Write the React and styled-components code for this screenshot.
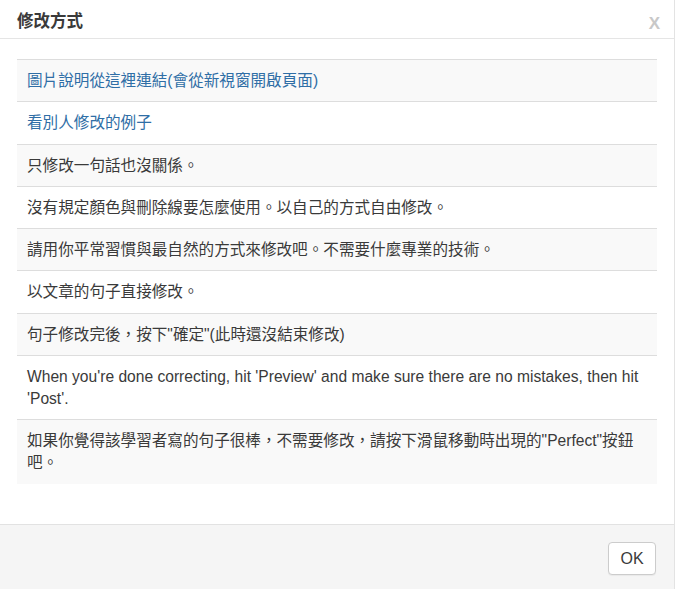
import React from "react";
import styled, { createGlobalStyle } from "styled-components";

const GlobalStyle = createGlobalStyle`
  html, body {
    margin: 0;
    padding: 0;
    background: #ffffff;
  }
  body {
    font-family: "Liberation Sans", "Noto Sans CJK TC", sans-serif;
    color: #3a3a3a;
  }
`;

const Dialog = styled.div`
  width: 674px;
  height: 589px;
  display: flex;
  flex-direction: column;
  background: #fff;
  border-right: 1px solid #e3e3e3;
`;

const Header = styled.div`
  height: 38px;
  padding: 0 17px;
  display: flex;
  align-items: center;
  justify-content: space-between;
  border-bottom: 1px solid #e5e5e5;
`;

const Title = styled.h4`
  margin: 0;
  font-size: 16.5px;
  font-weight: 700;
  color: #3a3a3a;
  padding-top: 1px;
`;

const Close = styled.span`
  font-family: "Liberation Sans", sans-serif;
  font-size: 17px;
  font-weight: 700;
  color: #c8c8c8;
  margin-right: -3px;
  padding-top: 10px;
`;

const Body = styled.div`
  flex: 1;
  padding: 20px 17px 0 17px;
`;

const Table = styled.div`
  display: flex;
  flex-direction: column;
`;

const Row = styled.div`
  border-top: 1px solid #dddddd;
  padding: 10px 11px 9.3px 10px;
  line-height: 22px;
  font-size: 15.6px;
  background: ${(p) => (p.$striped ? "#f9f9f9" : "#ffffff")};
`;

const Link = styled.a`
  color: #2f6ea6;
  text-decoration: none;
`;

const Footer = styled.div`
  height: 65px;
  border-top: 1px solid #e2e2e2;
  background: #f5f5f5;
  display: flex;
  justify-content: flex-end;
  align-items: flex-start;
  padding: 17px 18px 0 0;
  box-sizing: border-box;
`;

const Button = styled.button`
  width: 48px;
  height: 33px;
  border: 1px solid #cccccc;
  border-radius: 4px;
  background: #ffffff;
  color: #3a3a3a;
  font-family: "Liberation Sans", sans-serif;
  font-size: 16px;
  padding: 0;
  box-shadow: 0 1px 1px rgba(0, 0, 0, 0.05);
`;

const rows = [
  { link: true, text: "圖片說明從這裡連結(會從新視窗開啟頁面)" },
  { link: true, text: "看別人修改的例子" },
  { text: "只修改一句話也沒關係。" },
  { text: "沒有規定顏色與刪除線要怎麼使用。以自己的方式自由修改。" },
  { text: "請用你平常習慣與最自然的方式來修改吧。不需要什麼專業的技術。" },
  { text: "以文章的句子直接修改。" },
  { text: "句子修改完後，按下\"確定\"(此時還沒結束修改)" },
  {
    text: "When you're done correcting, hit 'Preview' and make sure there are no mistakes, then hit 'Post'.",
  },
  {
    text: "如果你覺得該學習者寫的句子很棒，不需要修改，請按下滑鼠移動時出現的\"Perfect\"按鈕吧。",
  },
];

export default function App() {
  return (
    <>
      <GlobalStyle />
      <Dialog>
        <Header>
          <Title>修改方式</Title>
          <Close>X</Close>
        </Header>
        <Body>
          <Table>
            {rows.map((r, i) => (
              <Row key={i} $striped={i % 2 === 0}>
                {r.link ? <Link href="#">{r.text}</Link> : r.text}
              </Row>
            ))}
          </Table>
        </Body>
        <Footer>
          <Button>OK</Button>
        </Footer>
      </Dialog>
    </>
  );
}
